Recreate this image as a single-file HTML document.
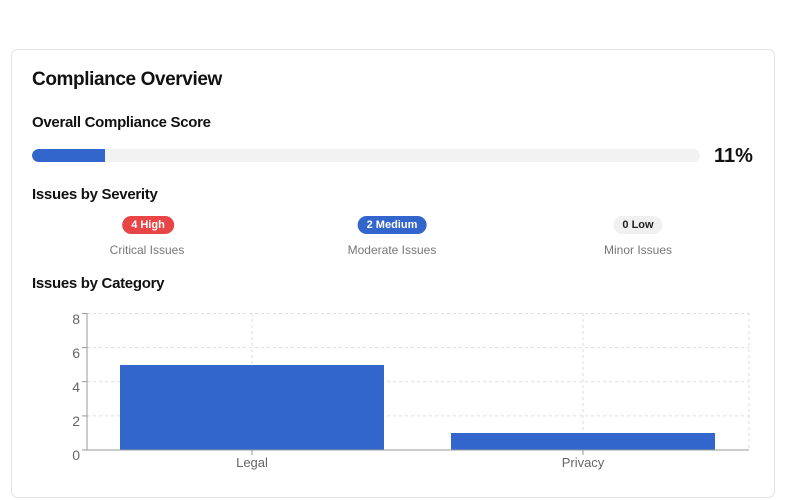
<!DOCTYPE html>
<html><head><style>
body{margin:0;background:#fff;font-family:"Liberation Sans",sans-serif;color:#111;}
.card{position:absolute;left:11px;top:49px;width:762px;height:447px;border:1px solid #e3e3e3;border-radius:7px;}
.t{position:absolute;white-space:nowrap;}
.h{font-size:15px;font-weight:bold;letter-spacing:-0.3px;}
.badge{position:absolute;height:18px;line-height:18px;border-radius:9px;font-size:11px;font-weight:bold;padding:0 9px;transform:translateX(-50%);}
.lbl{position:absolute;font-size:12px;color:#777;transform:translateX(-50%);white-space:nowrap;}
</style></head><body>
<div class="card"></div>
<div class="t" style="left:32px;top:69px;font-size:19px;font-weight:bold;letter-spacing:-0.4px;">Compliance Overview</div>
<div class="t h" style="left:32px;top:114px;">Overall Compliance Score</div>
<div style="position:absolute;left:32px;top:149px;width:668px;height:13px;background:#f2f2f2;border-radius:7px;overflow:hidden"><div style="width:73px;height:13px;background:#3366cc;border-radius:7px 0 0 7px"></div></div>
<div class="t" style="left:714px;top:145px;font-size:20px;font-weight:bold;">11%</div>
<div class="t h" style="left:32px;top:186px;">Issues by Severity</div>
<div class="badge" style="left:148px;top:216px;background:#e84646;color:#fff">4 High</div>
<div class="badge" style="left:392px;top:216px;background:#3366cc;color:#fff">2 Medium</div>
<div class="badge" style="left:638px;top:216px;background:#f0f0f0;color:#222">0 Low</div>
<div class="lbl" style="left:147px;top:243px">Critical Issues</div>
<div class="lbl" style="left:392px;top:243px">Moderate Issues</div>
<div class="lbl" style="left:638px;top:243px">Minor Issues</div>
<div class="t h" style="left:32px;top:275px;">Issues by Category</div>
<svg style="position:absolute;left:0;top:0" width="800" height="500" font-family="Liberation Sans" font-size="14" fill="#666">
<g stroke="#ddd" stroke-dasharray="3,3">
<line x1="87" y1="313.5" x2="749" y2="313.5"/><line x1="87" y1="347.6" x2="749" y2="347.6"/>
<line x1="87" y1="381.7" x2="749" y2="381.7"/><line x1="87" y1="415.9" x2="749" y2="415.9"/>
<line x1="252" y1="313" x2="252" y2="450"/><line x1="583" y1="313" x2="583" y2="450"/><line x1="749" y1="313" x2="749" y2="450"/>
</g>
<rect x="120" y="365" width="264" height="85" fill="#3366cc"/>
<rect x="451" y="433" width="264" height="17" fill="#3366cc"/>
<g stroke="#999"><line x1="87" y1="313" x2="87" y2="450"/><line x1="87" y1="450" x2="749" y2="450"/>
<line x1="82" y1="313.5" x2="87" y2="313.5"/><line x1="82" y1="347.6" x2="87" y2="347.6"/><line x1="82" y1="381.7" x2="87" y2="381.7"/><line x1="82" y1="415.9" x2="87" y2="415.9"/><line x1="82" y1="450" x2="87" y2="450"/>
<line x1="252" y1="450" x2="252" y2="455"/><line x1="583" y1="450" x2="583" y2="455"/></g>
<g text-anchor="end"><text x="80" y="324">8</text><text x="80" y="358">6</text><text x="80" y="392">4</text><text x="80" y="426">2</text><text x="80" y="460">0</text></g>
<g text-anchor="middle" font-size="13"><text x="252" y="467">Legal</text><text x="583" y="467">Privacy</text></g>
</svg>
</body></html>
